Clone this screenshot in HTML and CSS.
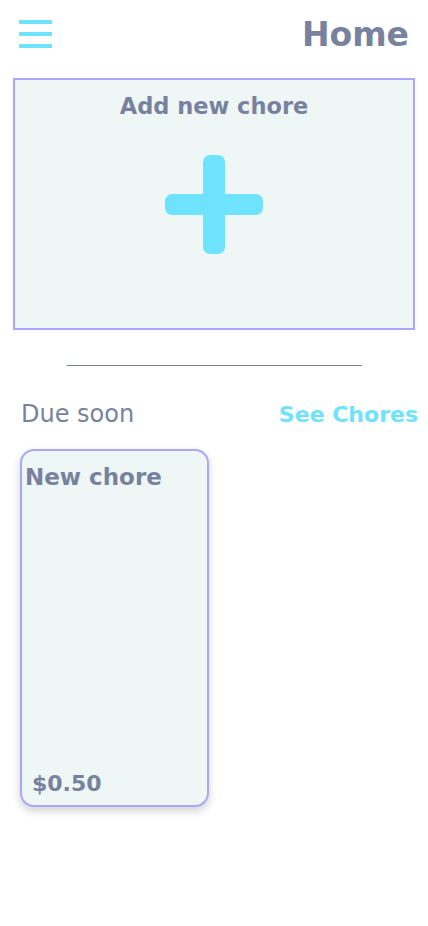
FILE: index.html
```html
<!DOCTYPE html>
<html>
<head>
<meta charset="utf-8">
<link rel="stylesheet" href="styles.css">
</head>
<body>
<header class="topbar">
  <div class="menu" aria-label="menu">
    <span class="bar"></span><span class="bar"></span><span class="bar"></span>
  </div>
  <h1 class="title">Home</h1>
</header>
<section class="add-box">
  <div class="add-label">Add new chore</div>
  <svg class="plus" width="98" height="99" viewBox="0 0 98 99">
    <rect x="38" y="0" width="22" height="99" rx="7" fill="#6fe3fd"/>
    <rect x="0" y="39" width="98" height="21" rx="7" fill="#6fe3fd"/>
  </svg>
</section>
<hr class="divider">
<div class="section-head">
  <span class="due">Due soon</span>
  <span class="see">See Chores</span>
</div>
<div class="cards">
  <div class="card">
    <div class="card-title">New chore</div>
    <div class="card-price">$0.50</div>
  </div>
</div>
</body>
</html>
```
FILE: styles.css
```css
html, body {
  margin: 0;
  padding: 0;
  background: #ffffff;
  font-family: "DejaVu Sans", "Noto Sans", sans-serif;
  color: #78829f;
}
.topbar {
  display: flex;
  justify-content: space-between;
  align-items: flex-start;
  padding: 20px 19px 0 19px;
  height: 58px;
  box-sizing: border-box;
}
.menu {
  display: flex;
  flex-direction: column;
  gap: 8px;
  width: 33px;
}
.bar {
  display: block;
  height: 4px;
  background: #6fe3fd;
}
.title {
  margin: 0;
  font-size: 33px;
  font-weight: bold;
  line-height: 30px;
  color: #78829f;
}
.add-box {
  margin: 20px 13px 0 13px;
  height: 252px;
  box-sizing: border-box;
  border: 2px solid #aaa7f8;
  background: #eef7f6;
  display: flex;
  flex-direction: column;
  align-items: center;
}
.add-label {
  font-size: 22.5px;
  font-weight: bold;
  line-height: 26px;
  margin-top: 13px;
  color: #78829f;
}
.plus {
  display: block;
  margin-top: 36px;
}
.divider {
  margin: 35px auto 0 auto;
  width: 295px;
  border: none;
  height: 1px;
  background: #7a8095;
}
.section-head {
  display: flex;
  justify-content: space-between;
  align-items: baseline;
  padding: 34px 10px 0 21px;
  line-height: 28px;
}
.due {
  font-size: 24px;
  color: #78829f;
}
.see {
  font-size: 22px;
  font-weight: bold;
  color: #6fe3fd;
}
.cards {
  display: flex;
  padding: 20px 0 40px 20px;
}
.card {
  width: 189px;
  height: 358px;
  box-sizing: border-box;
  border: 2px solid #aaa7f8;
  border-radius: 14px;
  background: #eef7f6;
  box-shadow: 0 4px 8px rgba(0, 0, 0, 0.18);
  display: flex;
  flex-direction: column;
  justify-content: space-between;
  padding: 13px 10px 8px 3px;
}
.card-title {
  font-size: 23px;
  font-weight: bold;
  line-height: 26px;
}
.card-price {
  font-size: 22px;
  font-weight: bold;
  line-height: 26px;
  padding-left: 7px;
}
```
